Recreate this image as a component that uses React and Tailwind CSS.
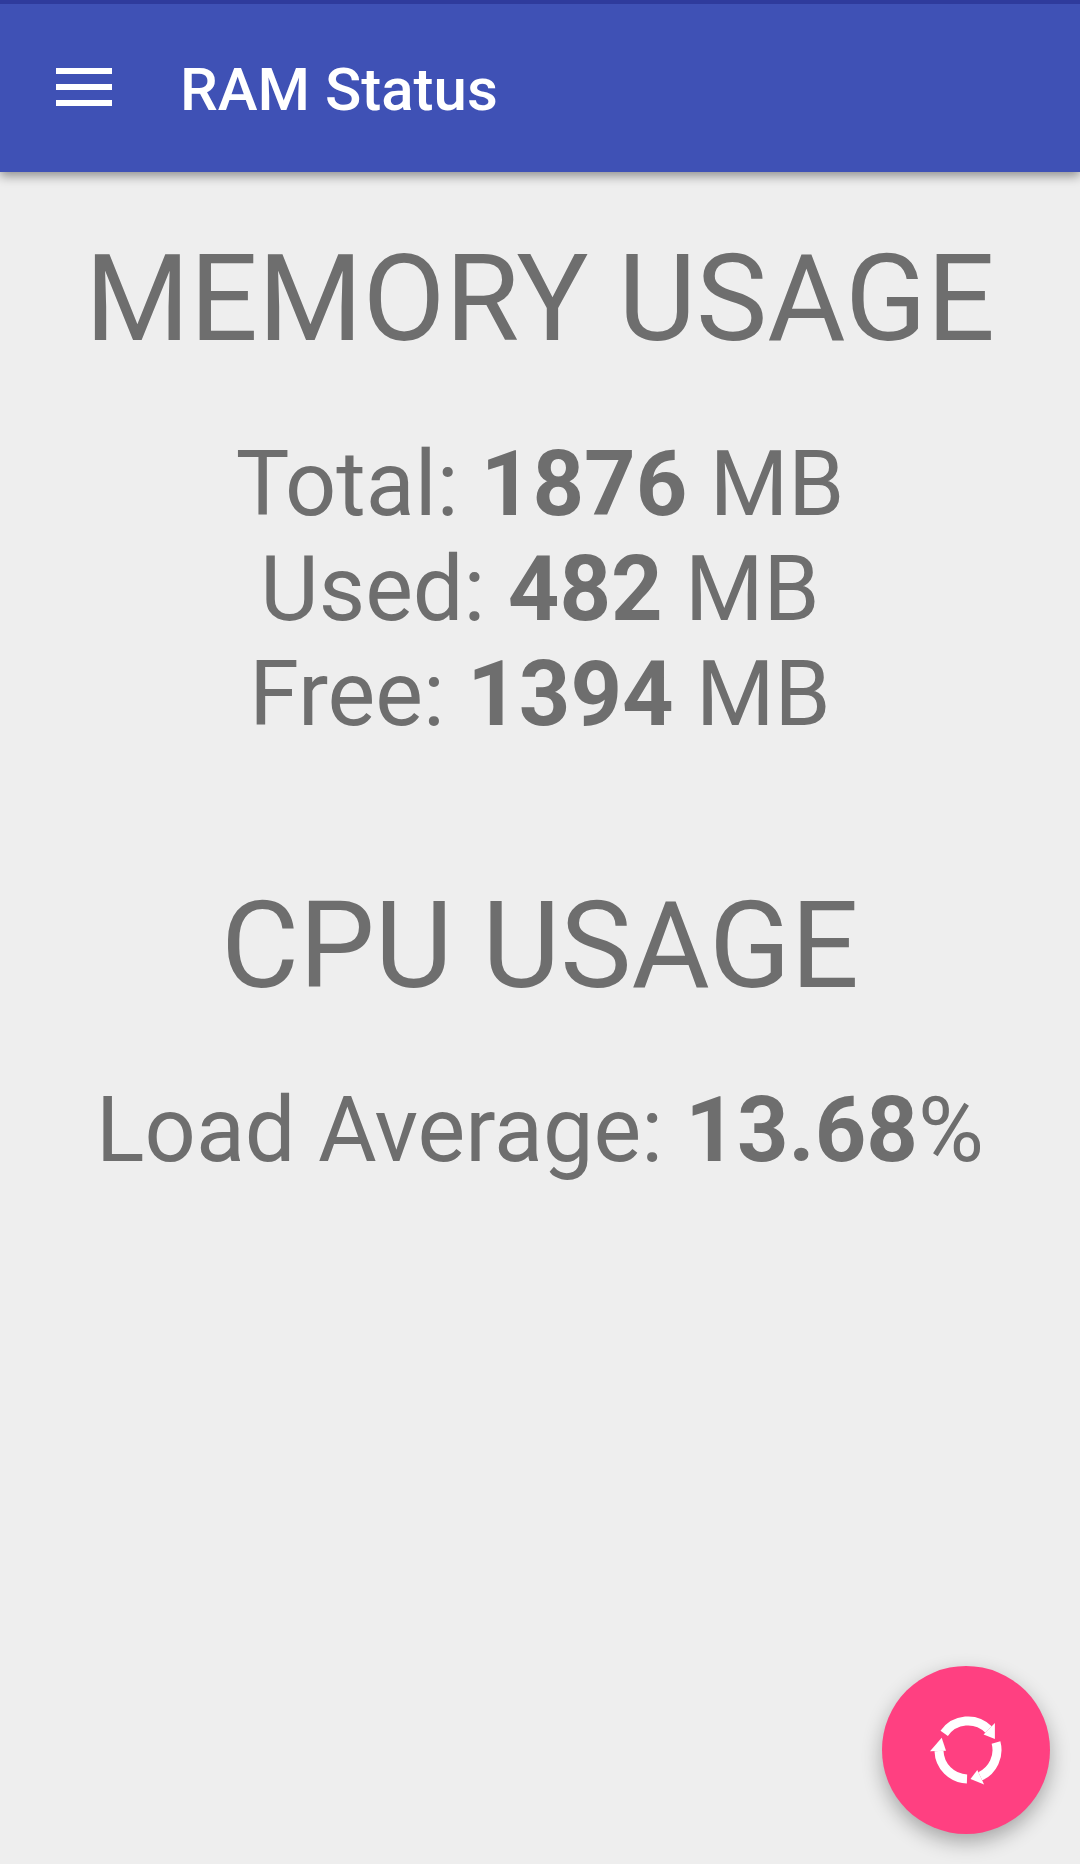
import React from "react";
export default function App() {
  return (
    <div className="relative w-[1080px] h-[1864px] overflow-hidden bg-[#eeeeee] text-[#6e6e6e] font-['Roboto',sans-serif]">
      <header className="h-[172px] bg-[#3f51b5] border-t-[4px] border-[#2f3b9c] shadow-[0_4px_10px_rgba(0,0,0,0.4)] flex items-center text-white">
        <svg className="ml-[56px] w-[56px] h-[38px] mt-[-2px]" viewBox="0 0 56 38"><path d="M0 3h56M0 19h56M0 35h56" stroke="#fff" strokeWidth="6"/></svg>
        <span className="ml-[68px] mt-[4px] text-[60px] font-medium">RAM Status</span>
      </header>
      <main className="flex flex-col items-center">
        <h1 className="mt-[57px] text-[120px] leading-[140px]">MEMORY USAGE</h1>
        <div className="mt-[63px] text-center text-[90px] leading-[105px]">
          <p>Total: <b>1876</b> MB</p>
          <p>Used: <b>482</b> MB</p>
          <p>Free: <b>1394</b> MB</p>
        </div>
        <h1 className="mt-[129px] text-[120px] leading-[140px]">CPU USAGE</h1>
        <p className="mt-[62px] text-[90px] leading-[105px]">Load Average: <b>13.68</b>%</p>
      </main>
      <button className="absolute left-[882px] top-[1666px] w-[168px] h-[168px] rounded-full bg-[#ff4081] shadow-[0_8px_20px_rgba(0,0,0,0.3)] flex items-center justify-center">
        <svg width="80" height="80" viewBox="-42 -40 80 80" fill="none" stroke="#fff" strokeWidth="9">
          <path d="M-23.8 -16.6A29 29 0 0 1 20.5 -20.5"/>
          <path d="M15.6 -15.6L26.9 -26.9 26.9 -10.9z" fill="#fff" stroke="none"/>
          <path d="M28 -7.5A29 29 0 0 1 12.3 26.3"/>
          <path d="M9.3 19.9L16.1 34.4 2.5 28.9z" fill="#fff" stroke="none"/>
          <path d="M-1 29A29 29 0 0 1 -29 1"/>
          <path d="M-22 0.8L-38 1.3 -26.3 -12.3z" fill="#fff" stroke="none"/>
        </svg>
      </button>
    </div>
  );
}
